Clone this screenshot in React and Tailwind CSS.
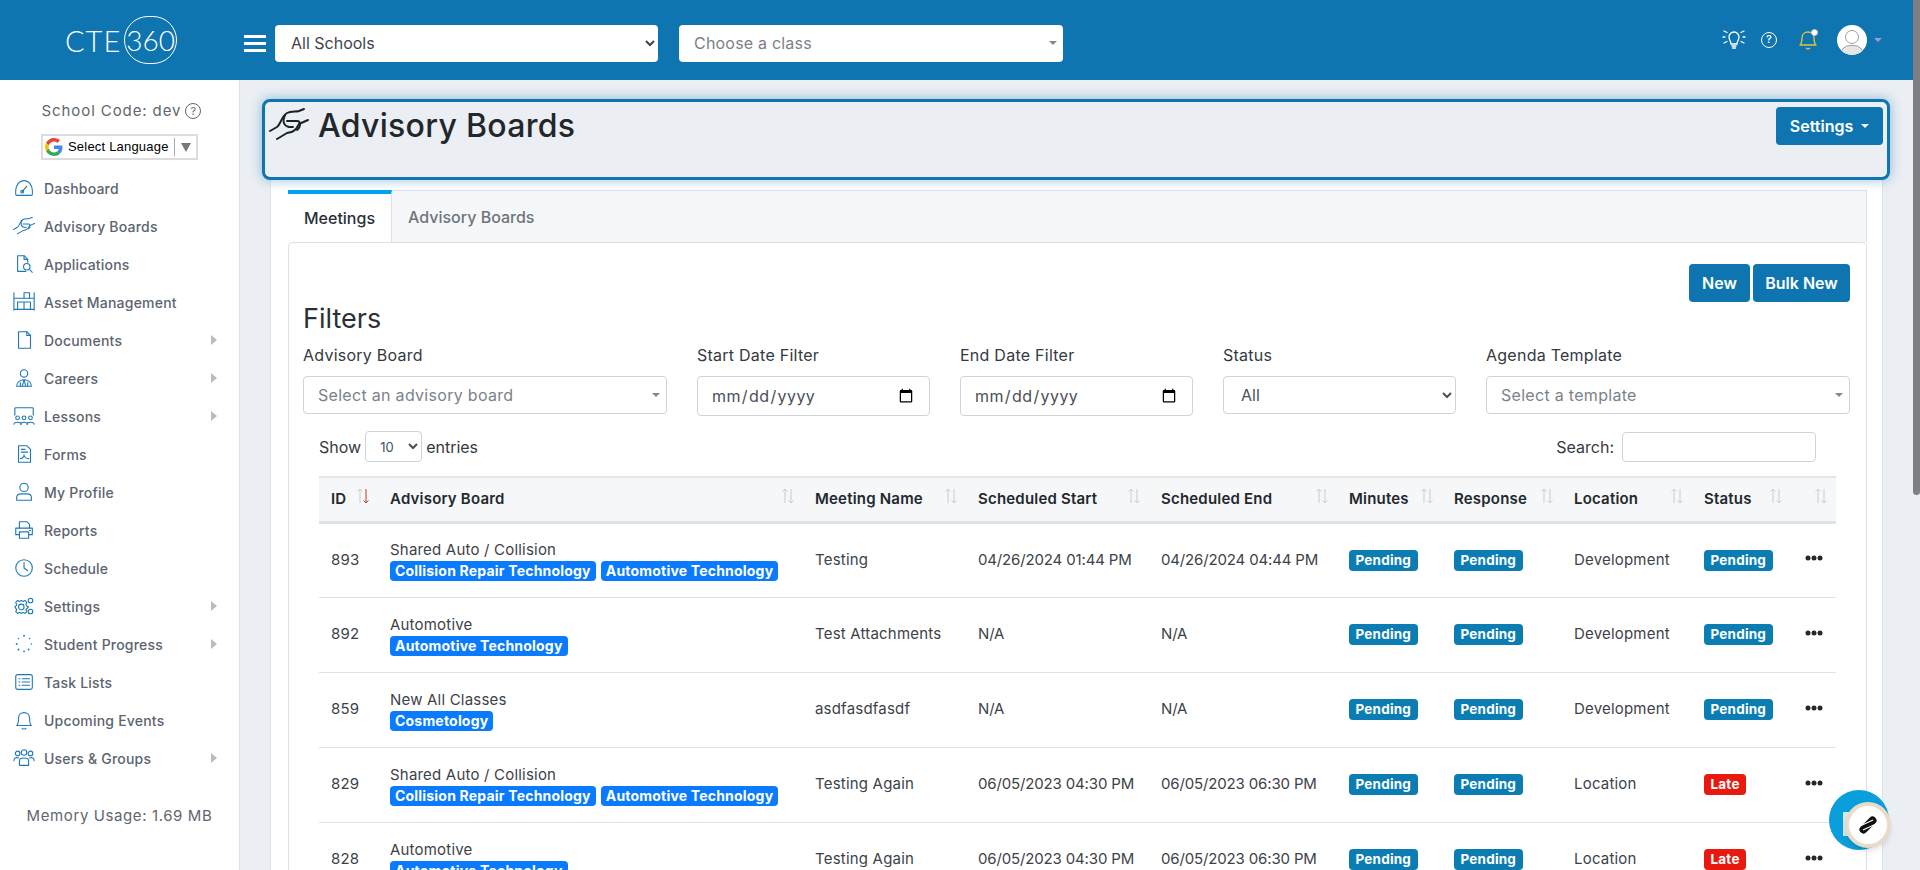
const BLUE_ICON = '#1f78b4'

function Ico({ children, w = 24 }) {
  return (
    <svg width={w} height="24" viewBox="0 0 24 24" fill="none" stroke={BLUE_ICON} strokeWidth="1.2" strokeLinecap="round" strokeLinejoin="round">
      {children}
    </svg>
  )
}

function Handshake({ size = 24, color = BLUE_ICON, sw = 1.2 }) {
  return (
    <svg width={size} height={size * 0.825} viewBox="0 0 40 33" fill="none" stroke={color} strokeWidth={sw * 1.6} strokeLinecap="round" strokeLinejoin="round">
      <path d="M1 23 L8 19 C12 16 12 9 18 5 C22 3 27 4 30 3 L35 1" />
      <path d="M8 31 L18 25 C23 24 26 24 30 16 L39 12" />
      <path d="M16 7 C13 14 15 18 20 19 H24" />
      <path d="M18 13 H28 C32 13 32 19 28 22" />
    </svg>
  )
}

const navIcons = {
  dashboard: <Ico><path d="M3 19 C2 9 7 4 12 4 C17 4 22 9 21 19 C21 20 20 20 20 20 L4 20 C3 20 3 20 3 19Z" /><path d="M10 16 L15 10" /><circle cx="10" cy="16" r="1.5" /></Ico>,
  boards: <Handshake />,
  apps: <Ico><path d="M14 20 H5 V3 H12 L16 7 V10" /><path d="M12 3 V7 H16" /><circle cx="15" cy="15" r="3.5" /><path d="M18 18 L21 21" /></Ico>,
  asset: <Ico w={24}><path d="M1 2 V21 M23 2 V21 M1 20 H23 M1 8 H23" /><path d="M5 20 V12 H12 V20 M12 12 H19 V20" /><path d="M12 8 V2 H18 V8" /></Ico>,
  docs: <Ico><path d="M6 3 H15 L19 7 V21 H6 Z" /><path d="M15 3 V7 H19" /></Ico>,
  careers: <Ico><circle cx="12" cy="7" r="4" /><path d="M4 21 C4 16 8 14 12 14 C16 14 20 16 20 21 Z" /><path d="M12 14 L10 21 M12 14 L14 21 M8 21 V17 M16 21 V17" /></Ico>,
  lessons: <Ico><path d="M2 11 V4 C2 3 3 3 3 3 H21 C22 3 22 4 22 4 V11" /><circle cx="5" cy="14" r="2" /><circle cx="12" cy="14" r="2" /><circle cx="19" cy="14" r="2" /><path d="M1 21 C1 18 9 18 9 21 M8 21 C8 18 16 18 16 21 M15 21 C15 18 23 18 23 21" /></Ico>,
  forms: <Ico><path d="M6 3 H15 L19 7 V21 H6 Z" /><path d="M9 7 H13 M9 10 H16 M8 17 C11 17 12 14 12 13 C12 15 14 17 17 17" /></Ico>,
  profile: <Ico><circle cx="12" cy="7" r="4.5" /><path d="M4 21 V18 C4 15 7 14 9 14 H15 C17 14 20 15 20 18 V21 Z" /></Ico>,
  reports: <Ico><path d="M7 10 V3 H15 L18 6 V10" /><path d="M7 17 H3 V10 H21 V17 H17" /><path d="M7 14 H17 V21 H7 Z" /><path d="M18 12.5 H19" /></Ico>,
  schedule: <Ico><circle cx="12" cy="12" r="9" /><path d="M12 6 V12 L16 15" /></Ico>,
  settings: <Ico><circle cx="9" cy="13" r="3" /><path d="M9 6 L11 7 L13 6 L15 8 L14 10 L15 12 L17 13 L15 15 L14 16 L15 18 L13 20 L11 19 L9 20 L7 19 L5 20 L3 18 L4 16 L2 13 L4 11 L3 8 L5 6 L7 7 Z" /><circle cx="19" cy="6" r="2.5" /><circle cx="19" cy="18" r="2.5" /></Ico>,
  progress: <svg width="24" height="24" viewBox="0 0 24 24" fill={BLUE_ICON}><circle cx="12" cy="3" r="1" /><circle cx="18" cy="6" r="0.8" /><circle cx="20" cy="12" r="0.8" /><circle cx="17" cy="18" r="1" /><circle cx="12" cy="20" r="1" /><circle cx="6" cy="18" r="1" /><circle cx="4" cy="12" r="1" /><circle cx="6" cy="6" r="0.8" /></svg>,
  tasks: <Ico><rect x="3" y="4" width="18" height="16" rx="2" /><path d="M10 8.5 H18 M10 12 H18 M10 15.5 H18 M6.5 8.5 H7.5 M6.5 12 H7.5 M6.5 15.5 H7.5" /></Ico>,
  events: <Ico><path d="M4 18 C6 16 6 14 6 10 C6 6 9 4 12 4 C15 4 18 6 18 10 C18 14 18 16 20 18 Z" /><path d="M10 21 C11 22 13 22 14 21" /></Ico>,
  users: <Ico><circle cx="5" cy="7" r="2.5" /><circle cx="12" cy="6" r="3" /><circle cx="19" cy="7" r="2.5" /><path d="M1 15 C1 12 3 11 6 12 M23 15 C23 12 21 11 18 12" /><path d="M7 20 V15 C7 13 9 12 12 12 C15 12 17 13 17 15 V20 Z" /></Ico>,
}

const navItems = [
  ['Dashboard', 'dashboard'],
  ['Advisory Boards', 'boards'],
  ['Applications', 'apps'],
  ['Asset Management', 'asset'],
  ['Documents', 'docs', true],
  ['Careers', 'careers', true],
  ['Lessons', 'lessons', true],
  ['Forms', 'forms'],
  ['My Profile', 'profile'],
  ['Reports', 'reports'],
  ['Schedule', 'schedule'],
  ['Settings', 'settings', true],
  ['Student Progress', 'progress', true],
  ['Task Lists', 'tasks'],
  ['Upcoming Events', 'events'],
  ['Users & Groups', 'users', true],
]

const rows = [
  { id: 893, board: 'Shared Auto / Collision', tags: ['Collision Repair Technology', 'Automotive Technology'], name: 'Testing', start: '04/26/2024 01:44 PM', end: '04/26/2024 04:44 PM', loc: 'Development', status: 'Pending' },
  { id: 892, board: 'Automotive', tags: ['Automotive Technology'], name: 'Test Attachments', start: 'N/A', end: 'N/A', loc: 'Development', status: 'Pending' },
  { id: 859, board: 'New All Classes', tags: ['Cosmetology'], name: 'asdfasdfasdf', start: 'N/A', end: 'N/A', loc: 'Development', status: 'Pending' },
  { id: 829, board: 'Shared Auto / Collision', tags: ['Collision Repair Technology', 'Automotive Technology'], name: 'Testing Again', start: '06/05/2023 04:30 PM', end: '06/05/2023 06:30 PM', loc: 'Location', status: 'Late' },
  { id: 828, board: 'Automotive', tags: ['Automotive Technology'], name: 'Testing Again', start: '06/05/2023 04:30 PM', end: '06/05/2023 06:30 PM', loc: 'Location', status: 'Late' },
]

const columns = [
  ['ID', 'w-[59px]', true],
  ['Advisory Board', 'w-[425px]'],
  ['Meeting Name', 'w-[163px]'],
  ['Scheduled Start', 'w-[183px]'],
  ['Scheduled End', 'w-[188px]'],
  ['Minutes', 'w-[105px]'],
  ['Response', 'w-[120px]'],
  ['Location', 'w-[130px]'],
  ['Status', 'w-[99px]'],
  ['', 'w-[45px]'],
]

function SortArrows({ active }) {
  return (
    <svg className="absolute right-[8px] top-[9px]" width="14" height="18" viewBox="0 0 14 18" fill="none" strokeWidth="1">
      <path d="M4 16 V2 M1.5 4.5 L4 2 L6.5 4.5" stroke="#c9ccd1" />
      <path d="M10 2 V16 M7.5 13.5 L10 16 L12.5 13.5" stroke={active ? '#c0392b' : '#c9ccd1'} />
    </svg>
  )
}

function Sidebar() {
  return (
    <aside className="w-[240px] shrink-0 bg-white border-r border-[#dde1e6] h-[790px]">
      <div className="flex items-center justify-center gap-[4px] pt-[21px] pl-[4px] text-[15px] tracking-[0.9px] text-[#5f6670] leading-[20px]">
        School Code: dev
        <span className="w-[16px] h-[16px] rounded-full border border-[#5f6670] text-[11px] leading-[14px] tracking-normal text-center">?</span>
      </div>
      <div className="ml-[41px] mt-[13px] w-[157px] h-[26px] border-2 border-[#dcdcdc] bg-white flex items-center pl-[2px] font-['Liberation_Sans',sans-serif] text-[13px] tracking-[0.2px] text-black whitespace-nowrap">
        <svg width="18" height="18" viewBox="0 0 48 48" className="shrink-0 mr-[5px]">
          <path fill="#EA4335" d="M24 9.5c3.5 0 6.700 1.300 9.100 3.500l6.800-6.800C35.900 2.400 30.400 0 24 0 14.600 0 6.500 5.400 2.600 13.200l7.900 6.200C12.400 13.700 17.700 9.500 24 9.500z" />
          <path fill="#4285F4" d="M46.500 24.500c0-1.600-.1-3.100-.4-4.500H24v9h12.700c-.6 3-2.200 5.500-4.700 7.200l7.600 5.900c4.400-4.100 6.900-10.100 6.900-17.600z" />
          <path fill="#FBBC05" d="M10.500 28.600c-.5-1.400-.8-3-.8-4.600s.3-3.200.8-4.600l-7.900-6.200C.9 16.500 0 20.100 0 24s.9 7.500 2.600 10.800l7.900-6.200z" />
          <path fill="#34A853" d="M24 48c6.500 0 11.900-2.100 15.900-5.900l-7.600-5.900c-2.100 1.400-4.900 2.300-8.300 2.300-6.300 0-11.600-4.200-13.500-9.900l-7.900 6.200C6.500 42.600 14.600 48 24 48z" />
        </svg>
        Select Language
        <span className="w-px h-[18px] bg-[#aaa] ml-[5px] mr-[6px]" />
        <span className="w-0 h-0 border-x-[5px] border-x-transparent border-t-[9px] border-t-[#777]" />
      </div>
      <nav className="mt-[9px]">
        {navItems.map(([label, icon, sub]) => (
          <div key={label} className="relative flex items-center h-[38px] pl-[13px] text-[14px] tracking-[0.2px] font-medium text-[#5b6470]">
            <span className="w-[31px] shrink-0">
              <span className="block scale-[0.92] origin-left">{navIcons[icon]}</span>
            </span>
            {label}
            {sub && <span className="ml-auto mr-[22px] w-0 h-0 border-y-[5px] border-y-transparent border-l-[6px] border-l-[#b4bcc4]" />}
          </div>
        ))}
      </nav>
      <div className="mt-[28px] text-center text-[15px] tracking-[0.6px] text-[#5f6670]">Memory Usage: 1.69 MB</div>
    </aside>
  )
}

function Header() {
  return (
    <header className="h-[80px] bg-[#0f75b0] flex items-center relative">
      <div className="w-[240px] shrink-0 flex items-center pl-[65px]">
        <span className="text-white text-[29px] font-light tracking-[1px] leading-none font-['Lato',sans-serif]">CTE</span>
        <span className="ml-[3px] w-[53px] h-[48px] rounded-full border border-white text-white text-[28px] font-light flex items-center justify-center font-['Lato',sans-serif]">360</span>
      </div>
      <div className="flex flex-col gap-[4px] w-[22px] ml-[4px] mt-[6px]">
        <span className="h-[3px] bg-white" />
        <span className="h-[3px] bg-white" />
        <span className="h-[3px] bg-white" />
      </div>
      <select defaultValue="all" className="ml-[9px] mt-[6px] w-[383px] h-[37px] rounded-[4px] bg-white pl-[12px] pr-[8px] text-[16px] text-[#3f444b]">
        <option value="all">All Schools</option>
      </select>
      <div className="ml-[21px] mt-[6px] w-[384px] h-[37px] rounded-[4px] bg-white pl-[15px] text-[16px] tracking-[0.2px] text-[#7b8087] flex items-center justify-between pr-[6px]">
        Choose a class
        <span className="w-0 h-0 border-x-[4px] border-x-transparent border-t-[4px] border-t-[#888]" />
      </div>
      <div className="ml-auto mr-[38px] flex items-center">
        <svg width="24" height="24" viewBox="0 0 24 24" fill="none" stroke="#fff" strokeWidth="1.3" strokeLinecap="round">
          <path d="M9 16 C9 13 7 12 7 9 A5 5 0 0 1 17 9 C17 12 15 13 15 16 Z M10 18 H14 M10.500 20 H13.500" />
          <path d="M1 9 H3 M21 9 H23 M2 3 L5 4.500 M22 3 L19 4.500 M2 15 L5 13.500 M22 15 L19 13.500" />
        </svg>
        <span className="ml-[15px] w-[16px] h-[16px] rounded-full border-[1.5px] border-white text-white text-[11px] leading-[13px] text-center font-medium">?</span>
        <span className="relative ml-[22px] block w-[18px] h-[20px]">
          <svg width="18" height="20" viewBox="0 0 18 20" fill="none" stroke="#e8c33a" strokeWidth="1.300" strokeLinejoin="round">
            <path d="M1 15 C3 13 3 11 3 8 C3 4 6 2 9 2 C12 2 15 4 15 8 C15 11 15 13 17 15 Z" />
            <path d="M7 18 C8 19 10 19 11 18" />
          </svg>
          <span className="absolute -top-[1px] -right-[1px] w-[7px] h-[7px] rounded-full bg-white border border-[#c9c4ec]" />
        </span>
        <span className="ml-[20px] w-[30px] h-[30px] rounded-full bg-white overflow-hidden relative block">
          <span className="absolute left-[8px] top-[5px] w-[14px] h-[14px] rounded-full border border-[#9aa0a6]" />
          <span className="absolute left-[3px] top-[20px] w-[24px] h-[20px] rounded-full border border-[#9aa0a6] bg-[#e6e6e6]" />
        </span>
        <span className="ml-[7px] w-0 h-0 border-x-[4px] border-x-transparent border-t-[4px] border-t-[#9a9ccf]" />
      </div>
    </header>
  )
}

function FilterLabel({ children }) {
  return <div className="text-[16px] tracking-[0.25px] leading-[22px] text-[#343a40] mb-[10px]">{children}</div>
}

function Select2({ placeholder }) {
  return (
    <div className="h-[38px] rounded-[4px] border border-[#ced4da] bg-white flex items-center justify-between pl-[14px] pr-[6px] text-[16px] tracking-[0.3px] text-[#7b828a]">
      {placeholder}
      <span className="w-0 h-0 border-x-[4px] border-x-transparent border-t-[4px] border-t-[#888]" />
    </div>
  )
}

function Badge({ color, children }) {
  return <span className={`inline-block h-[21px] px-[6.500px] rounded-[4px] text-white text-[13.500px] leading-[21px] font-bold ${color}`}>{children}</span>
}

function Filters() {
  return (
    <div className="px-[14px]">
      <div className="text-[27px] leading-[36px] text-[#2b3036] -mt-[1px]">Filters</div>
      <div className="mt-[7px] grid grid-cols-[364px_233px_233px_233px_364px] gap-x-[30px]">
        <div><FilterLabel>Advisory Board</FilterLabel><Select2 placeholder="Select an advisory board" /></div>
        <div>
          <FilterLabel>Start Date Filter</FilterLabel>
          <input type="date" className="w-full h-[40px] rounded-[4px] border border-[#ced4da] px-[13px] text-[16px] tracking-[0.4px] text-[#495057]" />
        </div>
        <div>
          <FilterLabel>End Date Filter</FilterLabel>
          <input type="date" className="w-full h-[40px] rounded-[4px] border border-[#ced4da] px-[13px] text-[16px] tracking-[0.4px] text-[#495057]" />
        </div>
        <div>
          <FilterLabel>Status</FilterLabel>
          <select defaultValue="all" className="w-full h-[38px] rounded-[4px] border border-[#ced4da] bg-white pl-[13px] pr-[2px] text-[16px] text-[#495057]">
            <option value="all">All</option>
          </select>
        </div>
        <div><FilterLabel>Agenda Template</FilterLabel><Select2 placeholder="Select a template" /></div>
      </div>
    </div>
  )
}

function MeetingsTable() {
  return (
    <div className="mx-[30px] mt-[15px]">
      <div className="flex items-center justify-between h-[31px] pr-[20px] text-[16px] text-[#343a40]">
        <div className="flex items-center">
          Show
          <select defaultValue="10" className="mx-[4px] w-[57px] h-[31px] rounded-[4px] border border-[#ced4da] bg-white pl-[10px] text-[13px] text-[#495057]">
            <option value="10">10</option>
          </select>
          entries
        </div>
        <div className="flex items-center">
          Search:
          <input className="ml-[8px] w-[194px] h-[30px] rounded-[4px] border border-[#ced4da]" />
        </div>
      </div>
      <table className="mt-[14px] w-[1517px] table-fixed border-collapse text-[15px] tracking-[0.2px] text-[#3d4248]">
        <colgroup>
          {columns.map(([, w], i) => <col key={i} className={w} />)}
        </colgroup>
        <thead>
          <tr className="h-[45px] bg-[#f5f7f9] border-t-[2px] border-t-[#e3e6ea] border-b-[3px] border-b-[#dfe2e6]">
            {columns.map(([label, , active], i) => (
              <th key={i} className="relative text-left pl-[12px] font-semibold text-[15px] text-[#23282d]">
                {label}
                <SortArrows active={active} />
              </th>
            ))}
          </tr>
        </thead>
        <tbody>
          {rows.map((r) => (
            <tr key={r.id} className="h-[75px] border-b border-[#dee2e6]">
              <td className="pl-[12px]">{r.id}</td>
              <td className="pl-[12px]">
                <div className="leading-[22px]">{r.board}</div>
                <div className="flex gap-[5px] leading-[20px]">
                  {r.tags.map((t) => (
                    <span key={t} className="h-[20px] px-[5px] rounded-[4px] bg-[#0a7bff] text-white text-[14px] tracking-[0.2px] font-bold whitespace-nowrap">{t}</span>
                  ))}
                </div>
              </td>
              <td className="pl-[12px]">{r.name}</td>
              <td className="pl-[12px] tracking-[-0.15px]">{r.start}</td>
              <td className="pl-[12px] tracking-[-0.15px]">{r.end}</td>
              <td className="pl-[12px]"><Badge color="bg-[#0b7db3]">Pending</Badge></td>
              <td className="pl-[12px]"><Badge color="bg-[#0b7db3]">Pending</Badge></td>
              <td className="pl-[12px]">{r.loc}</td>
              <td className="pl-[12px]"><Badge color={r.status === 'Late' ? 'bg-[#e8190f]' : 'bg-[#0b7db3]'}>{r.status}</Badge></td>
              <td className="pl-[14px]">
                <svg width="18" height="6" viewBox="0 0 18 6" fill="#23282d" className="-mt-[4px]">
                  <circle cx="3" cy="3" r="2.500" /><circle cx="9" cy="3" r="2.500" /><circle cx="15" cy="3" r="2.500" />
                </svg>
              </td>
            </tr>
          ))}
        </tbody>
      </table>
    </div>
  )
}

function ChatWidget() {
  return (
    <div className="fixed left-[1829px] top-[790px] w-[60px] h-[60px] rounded-full bg-[#0a9fdc]">
      <span className="absolute left-[14px] top-[22px] w-[10px] h-[24px] bg-white/80" />
      <div className="absolute left-[16px] top-[12px] w-[46px] h-[46px] rounded-full bg-white border-[4px] border-[#e8dcc8] shadow-md flex items-center justify-center">
        <svg width="20" height="20" viewBox="0 0 20 20" fill="none">
          <path d="M5.500 14.500 L14.500 5.500" stroke="#111" strokeWidth="8" strokeLinecap="round" />
          <path d="M2 11 L15 5 M5 15 L18 9" stroke="#fff" strokeWidth="1.100" />
        </svg>
      </div>
    </div>
  )
}

export default function App() {
  return (
    <div className="relative h-[870px] overflow-hidden bg-[#ebeef3] font-['Inter','Noto_Sans',sans-serif]">
      <Header />
      <div className="flex">
        <Sidebar />
        <main className="flex-1 min-w-0 pl-[22px] pr-[30px] pt-[19px]">
          <div className="relative z-10 h-[81px] rounded-[8px] border-[3px] border-[#0f75b0] bg-[#ebeef3] shadow-[0_0_12px_rgba(15,117,176,0.45)] flex items-start justify-between pl-[4px] pr-[4px]">
            <div className="flex items-start mt-[2px]">
              <span className="block mt-[4px]"><Handshake size={40} color="#1c2126" sw={1.2} /></span>
              <span className="ml-[9px] text-[32px] tracking-[0.3px] leading-[44px] font-medium text-[#22272c]">Advisory Boards</span>
            </div>
            <div className="mt-[5px] w-[107px] h-[38px] rounded-[4px] bg-[#0f75b0] text-white text-[16px] font-semibold flex items-center justify-center gap-[8px]">
              Settings
              <span className="w-0 h-0 border-x-[4px] border-x-transparent border-t-[4px] border-t-white" />
            </div>
          </div>
          <div className="relative ml-[8px] mr-[7px] -mt-[8px] h-[700px] rounded-t-[6px] bg-white border border-[#dfe3e8] pt-[17px] pl-[17px] pr-[15px]">
            <div className="flex h-[52px] bg-[#f5f7f9] border border-[#dde1e6] border-b-0">
              <div className="w-[104px] -ml-px -mt-px bg-white border-t-[4px] border-t-[#00a2f2] border-r border-r-[#dde1e6] flex items-center justify-center text-[16px] font-medium text-[#2b3036]">Meetings</div>
              <div className="pl-[16px] flex items-center text-[16px] font-medium text-[#6c757d]">Advisory Boards</div>
            </div>
            <div className="h-[640px] border border-[#dde1e6] rounded-[4px] bg-white">
              <div className="flex justify-end gap-[3px] pt-[21px] pr-[16px]">
                <div className="w-[61px] h-[38px] rounded-[4px] bg-[#0f75b0] text-white text-[16px] font-semibold flex items-center justify-center">New</div>
                <div className="w-[97px] h-[38px] rounded-[4px] bg-[#0f75b0] text-white text-[16px] font-semibold flex items-center justify-center">Bulk New</div>
              </div>
              <Filters />
              <MeetingsTable />
            </div>
          </div>
        </main>
      </div>
      <ChatWidget />
      <div className="absolute right-0 top-0 w-[7px] h-[495px] rounded-b-[4px] bg-[#7d7f83] z-20" />
    </div>
  )
}
